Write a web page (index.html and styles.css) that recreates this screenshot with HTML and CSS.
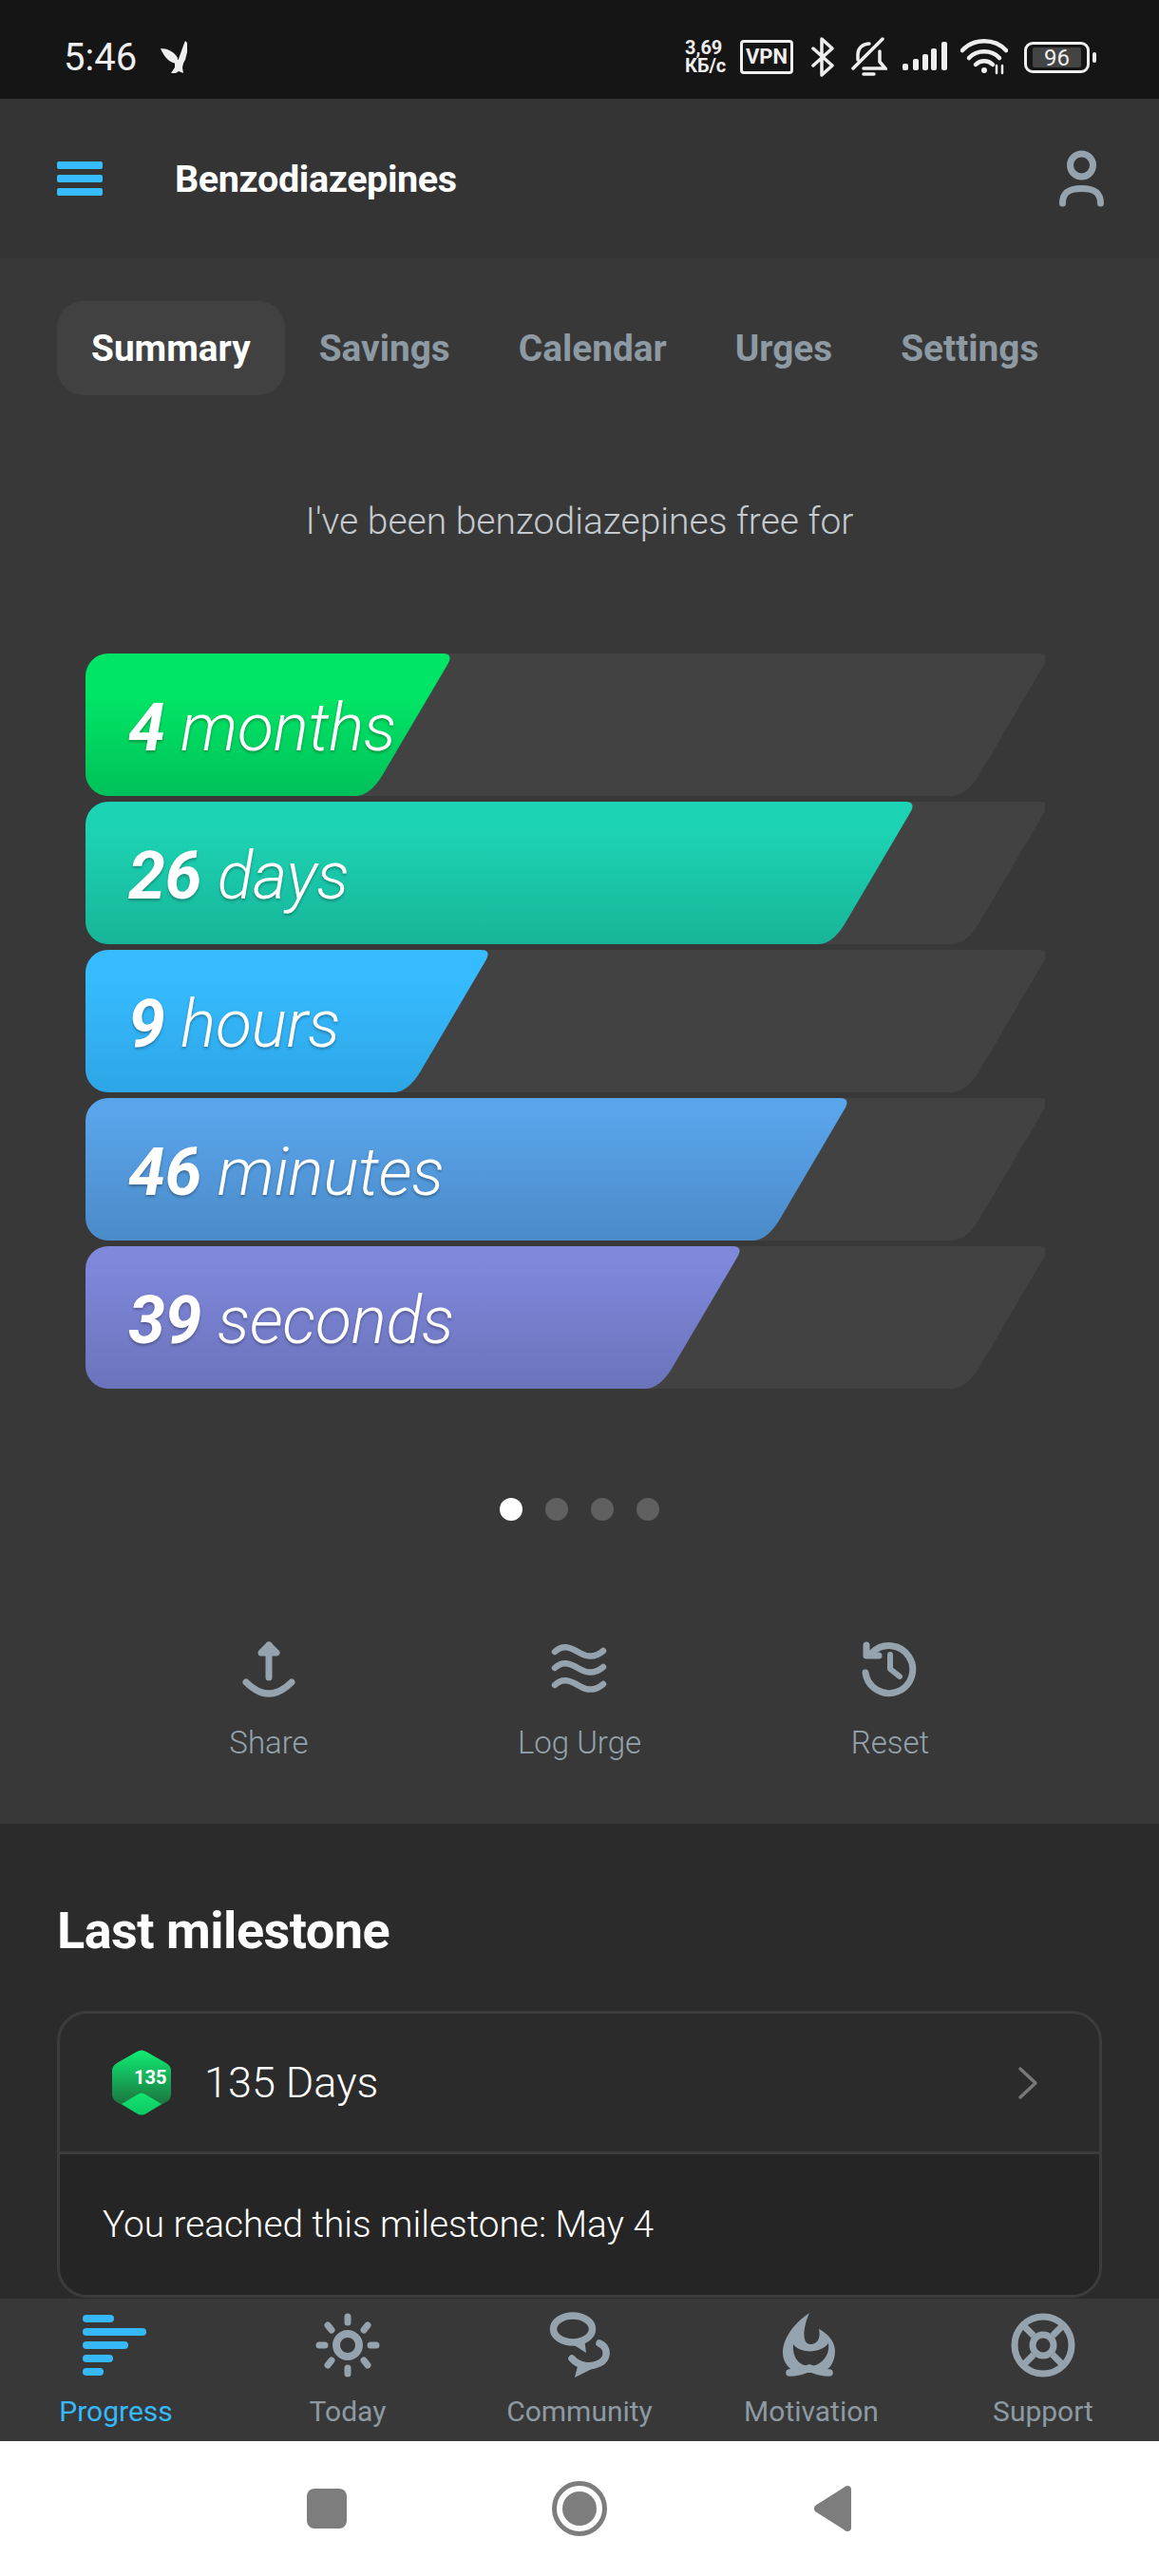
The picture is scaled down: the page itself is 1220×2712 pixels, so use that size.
FILE: index.html
```html
<!DOCTYPE html>
<html lang="en">
<head>
  <meta charset="UTF-8">
  <meta name="viewport" content="width=device-width, initial-scale=1.0">
  <title>Benzodiazepines</title>
  <link rel="stylesheet" href="styles.css">
</head>
<body>
<div class="screen">
  <!-- Status bar -->
  <div class="status-bar">
    <div class="status-left">
      <span class="clock">5:46</span>
      <svg class="bird" width="50" height="50" viewBox="0 0 50 50" fill="#eee">
        <path d="M9 16C16 16 23 19 27 26L26 32C19 31 13 26 9 16Z"/>
        <path d="M28 27L33 13L35 8L37 10L37 20L35 28L32 33L27 33Z"/>
        <path d="M24 28L34 27L32 36L33 42L28 40L25 42L20 42L24 36Z"/>
      </svg>
    </div>
    <div class="status-right">
      <div class="net-speed"><span>3,69</span><span>КБ/с</span></div>
      <span class="vpn-box">VPN</span>
      <svg class="gap-bt" width="26" height="42" viewBox="0 0 26 42" fill="none" stroke="#eee" stroke-width="3.5" stroke-linecap="round" stroke-linejoin="round">
        <path d="M3 12L23 30L12 40V2L23 12L3 30"/>
      </svg>
      <svg class="gap-bell" width="38" height="42" viewBox="0 0 38 42" fill="none" stroke="#eee" stroke-width="3.5" stroke-linecap="round">
        <path d="M2 33L33 2"/>
        <path d="M7 24V18C7 12 12 7 19 7"/>
        <path d="M13 33H36L30 26V15"/>
        <path d="M13 39H24"/>
      </svg>
      <svg class="gap-signal" width="47" height="30" viewBox="0 0 47 30" fill="#eee">
        <rect x="0" y="23" width="6" height="7" rx="2"/>
        <rect x="11" y="18" width="6" height="12" rx="2"/>
        <rect x="21" y="13" width="6" height="17" rx="2"/>
        <rect x="30" y="7" width="6" height="23" rx="2"/>
        <rect x="41" y="0" width="6" height="30" rx="2"/>
      </svg>
      <svg class="gap-wifi" width="50" height="38" viewBox="0 0 50 38" fill="none" stroke="#eee" stroke-width="4.5" stroke-linecap="round">
        <path d="M2 12C14 -1 36 -1 48 12"/>
        <path d="M9 20C17 11 33 11 41 20"/>
        <path d="M16 27C21 22 29 22 34 27"/>
        <circle cx="25" cy="33" r="3" fill="#eee" stroke="none"/>
        <path d="M38 28V36M44 28V36" stroke-width="2.5"/>
      </svg>
      <div class="battery">
        <div class="battery-body"><span class="battery-level">96</span></div>
        <div class="battery-nub"></div>
      </div>
    </div>
  </div>

  <!-- Top bar -->
  <div class="top-bar">
    <div class="hamburger"><span></span><span></span><span></span></div>
    <h2 class="top-title">Benzodiazepines</h2>
    <svg class="user-icon" width="50" height="60" viewBox="0 0 50 60" fill="none" stroke="#94a3ad" stroke-width="7" stroke-linecap="round">
      <circle cx="24.5" cy="16" r="12"/>
      <path d="M4.5 56C4.5 43 14 40.5 24.5 40.5C35 40.5 44.5 43 44.5 56"/>
    </svg>
  </div>

  <!-- Summary -->
  <div class="summary">
    <div class="tabs">
      <span class="tab active">Summary</span>
      <span class="tab">Savings</span>
      <span class="tab">Calendar</span>
      <span class="tab">Urges</span>
      <span class="tab">Settings</span>
    </div>

    <p class="lead">I've been benzodiazepines free for</p>

    <div class="bars">
      <div class="bar">
        <svg class="bar-shape" width="1010" height="150" viewBox="0 0 1010 150">
          <defs><linearGradient id="g-months" x1="0" y1="0" x2="0" y2="1"><stop offset="0.3" stop-color="#00e565"/><stop offset="1" stop-color="#00c15a"/></linearGradient></defs>
          <path fill="#424242" d="M24 0H1004Q1015 0 1010 10L940 129Q927 150 912 150H24A24 24 0 0 1 0 126V24A24 24 0 0 1 24 0Z"/>
          <path fill="url(#g-months)" d="M24 0H376Q387 0 382 10L312 129Q299 150 284 150H24A24 24 0 0 1 0 126V24A24 24 0 0 1 24 0Z"/>
        </svg>
        <div class="bar-label"><b>4</b> months</div>
      </div>
      <div class="bar">
        <svg class="bar-shape" width="1010" height="150" viewBox="0 0 1010 150">
          <defs><linearGradient id="g-days" x1="0" y1="0" x2="0" y2="1"><stop offset="0.2" stop-color="#1cd3b3"/><stop offset="1" stop-color="#17b599"/></linearGradient></defs>
          <path fill="#424242" d="M24 0H1004Q1015 0 1010 10L940 129Q927 150 912 150H24A24 24 0 0 1 0 126V24A24 24 0 0 1 24 0Z"/>
          <path fill="url(#g-days)" d="M24 0H863Q874 0 869 10L799 129Q786 150 771 150H24A24 24 0 0 1 0 126V24A24 24 0 0 1 24 0Z"/>
        </svg>
        <div class="bar-label"><b>26</b> days</div>
      </div>
      <div class="bar">
        <svg class="bar-shape" width="1010" height="150" viewBox="0 0 1010 150">
          <defs><linearGradient id="g-hours" x1="0" y1="0" x2="0" y2="1"><stop offset="0.2" stop-color="#36bbff"/><stop offset="1" stop-color="#2da6e6"/></linearGradient></defs>
          <path fill="#424242" d="M24 0H1004Q1015 0 1010 10L940 129Q927 150 912 150H24A24 24 0 0 1 0 126V24A24 24 0 0 1 24 0Z"/>
          <path fill="url(#g-hours)" d="M24 0H416Q427 0 422 10L352 129Q339 150 324 150H24A24 24 0 0 1 0 126V24A24 24 0 0 1 24 0Z"/>
        </svg>
        <div class="bar-label"><b>9</b> hours</div>
      </div>
      <div class="bar">
        <svg class="bar-shape" width="1010" height="150" viewBox="0 0 1010 150">
          <defs><linearGradient id="g-minutes" x1="0" y1="0" x2="0" y2="1"><stop offset="0.1" stop-color="#5aa4ec"/><stop offset="1" stop-color="#4a8bc8"/></linearGradient></defs>
          <path fill="#424242" d="M24 0H1004Q1015 0 1010 10L940 129Q927 150 912 150H24A24 24 0 0 1 0 126V24A24 24 0 0 1 24 0Z"/>
          <path fill="url(#g-minutes)" d="M24 0H794Q805 0 800 10L730 129Q717 150 702 150H24A24 24 0 0 1 0 126V24A24 24 0 0 1 24 0Z"/>
        </svg>
        <div class="bar-label"><b>46</b> minutes</div>
      </div>
      <div class="bar">
        <svg class="bar-shape" width="1010" height="150" viewBox="0 0 1010 150">
          <defs><linearGradient id="g-seconds" x1="0" y1="0" x2="0" y2="1"><stop offset="0.1" stop-color="#7f88db"/><stop offset="1" stop-color="#6b73bb"/></linearGradient></defs>
          <path fill="#424242" d="M24 0H1004Q1015 0 1010 10L940 129Q927 150 912 150H24A24 24 0 0 1 0 126V24A24 24 0 0 1 24 0Z"/>
          <path fill="url(#g-seconds)" d="M24 0H681Q692 0 687 10L617 129Q604 150 589 150H24A24 24 0 0 1 0 126V24A24 24 0 0 1 24 0Z"/>
        </svg>
        <div class="bar-label"><b>39</b> seconds</div>
      </div>
    </div>

    <div class="dots">
      <span class="dot on"></span>
      <span class="dot"></span>
      <span class="dot"></span>
      <span class="dot"></span>
    </div>

    <div class="actions">
      <div class="action">
        <svg width="60" height="60" viewBox="0 0 60 60" fill="none" stroke="#94a3ad" stroke-width="7" stroke-linecap="round" stroke-linejoin="round">
          <path d="M30 4V38"/>
          <path d="M22 12L30 4L38 12Z" fill="#94a3ad"/>
          <path d="M6 43Q30 67 54 43"/>
        </svg>
        <span class="action-label">Share</span>
      </div>
      <div class="action">
        <svg width="60" height="60" viewBox="0 0 60 60" fill="none" stroke="#94a3ad" stroke-width="6.5" stroke-linecap="round">
          <path d="M4 11C12 3 20 6 30 12C40 18 48 16 55 10"/>
          <path d="M4 28C12 20 20 23 30 29C40 35 48 33 55 27"/>
          <path d="M4 46C12 38 20 41 30 47C40 53 48 51 55 45"/>
        </svg>
        <span class="action-label">Log Urge</span>
      </div>
      <div class="action">
        <svg width="60" height="60" viewBox="0 0 60 60" fill="none" stroke="#94a3ad" stroke-width="7" stroke-linecap="round" stroke-linejoin="round">
          <path d="M11 12A25 25 0 1 1 4 33"/>
          <path d="M5 4V15H18"/>
          <path d="M30 14V29L40 37" stroke-width="6"/>
        </svg>
        <span class="action-label">Reset</span>
      </div>
    </div>
  </div>

  <!-- Last milestone -->
  <div class="milestone-section">
    <h2 class="section-title">Last milestone</h2>
    <div class="card">
      <div class="card-top">
        <svg class="hex" width="62" height="69" viewBox="0 0 62 69">
          <defs>
            <linearGradient id="hex-main" x1="0" y1="0" x2="0" y2="1"><stop offset="0.05" stop-color="#10e670"/><stop offset="0.8" stop-color="#1b7a41"/></linearGradient>
            <linearGradient id="hex-low" x1="0" y1="0" x2="0" y2="1"><stop offset="0" stop-color="#12e56f"/><stop offset="1" stop-color="#10c865"/></linearGradient>
          </defs>
          <path fill="url(#hex-main)" d="M26 2Q31 -1 36 2L57 14Q62 17 62 22V47Q62 52 57 55L36 67Q31 70 26 67L5 55Q0 52 0 47V22Q0 17 5 14Z"/>
          <path fill="url(#hex-low)" d="M27 47Q31 44 35 47L52 57L36 67Q31 70 26 67L10 57Z"/>
          <text class="hex-text" x="23" y="36">135</text>
        </svg>
        <span class="card-title">135 Days</span>
        <svg class="chevron" width="24" height="36" viewBox="0 0 24 36" fill="none" stroke="#787878" stroke-width="3.5" stroke-linecap="round" stroke-linejoin="round">
          <path d="M4 3L20 18L4 33"/>
        </svg>
      </div>
      <div class="card-bottom">You reached this milestone: May 4</div>
    </div>
  </div>

  <!-- Bottom nav -->
  <div class="tab-bar">
    <div class="tab-item selected">
      <svg width="90" height="90" viewBox="0 0 90 90" fill="#36b9fa">
        <rect x="10" y="12" width="33" height="8" rx="4"/>
        <rect x="10" y="26" width="67" height="8" rx="4"/>
        <rect x="10" y="40" width="48" height="8" rx="4"/>
        <rect x="10" y="54" width="32" height="8" rx="4"/>
        <rect x="10" y="68" width="22" height="8" rx="4"/>
      </svg>
      <span>Progress</span>
    </div>
    <div class="tab-item">
      <svg width="90" height="90" viewBox="0 0 90 90" fill="none" stroke="#94a3ad" stroke-width="7" stroke-linecap="round">
        <circle cx="45" cy="44" r="12" stroke-width="8"/>
        <path d="M45 14V20M45 68V74M15 44H21M69 44H75M24 23L28 28M62 60L66 65M66 23L62 28M28 60L24 65"/>
      </svg>
      <span>Today</span>
    </div>
    <div class="tab-item">
      <svg width="90" height="90" viewBox="0 0 90 90" fill="none" stroke="#94a3ad" stroke-width="7.5" stroke-linecap="round">
        <ellipse cx="38" cy="27" rx="20.5" ry="14"/>
        <path d="M36 42L50 37L52 52Z" fill="#94a3ad" stroke="none"/>
        <path d="M66 42C75 46 76 58 66 63C56 68 44 66 37 58"/>
        <path d="M43 66L40 78L60 68Z" fill="#94a3ad" stroke="none"/>
      </svg>
      <span>Community</span>
    </div>
    <div class="tab-item">
      <svg width="90" height="90" viewBox="0 0 90 90" fill="#94a3ad">
        <path fill-rule="evenodd" d="M43 10C28 20 15 36 15 52C15 63 23 71 32 73H56C64 70 70 62 70 50C70 41 63 32 53 27C55 36 52 43 44 43C36 43 35 28 43 10ZM26 43C33 53 55 53 63 42C65 56 54 66 44 66C32 66 25 57 26 43Z"/>
        <path d="M22 73Q32 73 43 68Q54 73 64 73" fill="none" stroke="#94a3ad" stroke-width="7.5" stroke-linecap="round"/>
      </svg>
      <span>Motivation</span>
    </div>
    <div class="tab-item">
      <svg width="90" height="90" viewBox="0 0 90 90" fill="none" stroke="#94a3ad" stroke-width="7">
        <circle cx="45" cy="44" r="30"/>
        <circle cx="45" cy="44" r="11"/>
        <path d="M35 34L24 23M55 34L66 23M35 54L24 65M55 54L66 65"/>
      </svg>
      <span>Support</span>
    </div>
  </div>

  <!-- System nav -->
  <div class="system-nav">
    <span class="sys-square"></span>
    <span class="sys-home"><span class="sys-home-dot"></span></span>
    <svg width="40" height="48" viewBox="0 0 40 48" fill="#7d7d7d">
      <path d="M36 0Q40 0 40 4V44Q40 48 36 48Q34 48 32 46L2 27Q0 24 2 21L32 2Q34 0 36 0Z"/>
    </svg>
  </div>
</div>
</body>
</html>
```

FILE: styles.css
```css
/* General */
body {
  margin: 0;
  font-family: 'Roboto', 'Liberation Sans', sans-serif;
  color: white;
  background: #383838;
}

.screen {
  width: 1220px;
  height: 2712px;
  display: flex;
  flex-direction: column;
  overflow: hidden;
}

/* Status bar */
.status-bar {
  height: 104px;
  flex: none;
  box-sizing: border-box;
  background: #151515;
  display: flex;
  justify-content: space-between;
  align-items: center;
  padding: 16px 66px 0 67px;
  color: #eee;
}

.status-left {
  display: flex;
  align-items: center;
}

.clock {
  font-size: 40px;
  width: 93px;
}

.status-right {
  display: flex;
  align-items: center;
}

.net-speed {
  display: flex;
  flex-direction: column;
  font-size: 20px;
  font-weight: 700;
  line-height: 19px;
  width: 45px;
  white-space: nowrap;
}

.vpn-box {
  box-sizing: border-box;
  width: 56px;
  height: 36px;
  margin-left: 13px;
  border: 3px solid #eee;
  border-radius: 4px;
  font-size: 22px;
  font-weight: 700;
  line-height: 30px;
  text-align: center;
}

.gap-bt { margin-left: 18px; }
.gap-bell { margin-left: 17px; }
.gap-signal { margin-left: 16px; margin-top: -2px; }
.gap-wifi { margin-left: 14px; }

.battery {
  display: flex;
  align-items: center;
  margin-left: 17px;
}

.battery-body {
  box-sizing: border-box;
  width: 69px;
  height: 33px;
  border: 3px solid #eee;
  border-radius: 9px;
  padding: 3px 6px;
}

.battery-level {
  display: block;
  height: 21px;
  background: #444;
  border-radius: 2px;
  font-size: 24px;
  line-height: 22px;
  text-align: center;
}

.battery-nub {
  width: 4px;
  height: 11px;
  margin-left: 3px;
  background: #eee;
  border-radius: 2px;
}

/* Top bar */
.top-bar {
  height: 168px;
  flex: none;
  background: #343434;
  display: flex;
  align-items: center;
  padding: 0 56px 0 60px;
}

.hamburger {
  width: 48px;
  display: flex;
  flex-direction: column;
  gap: 6px;
}

.hamburger span {
  height: 8px;
  background: #36bcff;
  border-radius: 2px;
}

.top-title {
  margin: 0 0 0 76px;
  flex: 1;
  font-size: 39.6px;
  font-weight: 700;
  letter-spacing: -0.4px;
}

/* Summary */
.summary {
  height: 1648px;
  flex: none;
  box-sizing: border-box;
  background: #383838;
  padding-top: 45px;
}

.tabs {
  display: flex;
  margin-left: 60px;
}

.tab {
  padding: 0 36px;
  height: 99px;
  line-height: 99px;
  font-size: 38.8px;
  font-weight: 700;
  color: #8d9aa3;
  border-radius: 28px;
}

.tab.active {
  background: #414141;
  color: white;
}

.lead {
  margin: 108px 0 0;
  font-size: 39px;
  font-weight: 300;
  line-height: 50px;
  text-align: center;
  color: #c4cace;
}

.bars {
  margin: 114px 0 0 90px;
  width: 1010px;
  display: flex;
  flex-direction: column;
  gap: 6px;
}

.bar {
  position: relative;
  height: 150px;
}

.bar-shape {
  position: absolute;
  top: 0;
  left: 0;
}

.bar-label {
  position: relative;
  padding: 7px 0 0 45px;
  font-size: 70px;
  font-style: italic;
  font-weight: 300;
  line-height: 143px;
  letter-spacing: -0.4px;
  text-shadow: 0 2px 3px rgba(0, 0, 0, 0.3);
}

.bar-label b {
  font-weight: 700;
}

.dots {
  margin-top: 115px;
  display: flex;
  justify-content: center;
  gap: 24px;
}

.dot {
  width: 24px;
  height: 24px;
  border-radius: 50%;
  background: #606060;
}

.dot.on {
  background: white;
}

.actions {
  margin-top: 127px;
  display: flex;
  justify-content: center;
}

.action {
  width: 327px;
  display: flex;
  flex-direction: column;
  align-items: center;
}

.action-label {
  margin-top: 27px;
  font-size: 33px;
  font-weight: 300;
  line-height: 40px;
  color: #94a3ad;
}

/* Last milestone */
.milestone-section {
  flex: 1;
  min-height: 0;
  background: #2b2b2b;
  padding: 0 60px;
  overflow: hidden;
}

.section-title {
  margin: 81px 0 0;
  font-size: 54px;
  font-weight: 700;
  line-height: 64px;
  letter-spacing: -0.5px;
}

.card {
  margin-top: 52px;
  border: 3px solid #3c3c3c;
  border-radius: 32px;
  overflow: hidden;
}

.card-top {
  height: 145px;
  display: flex;
  align-items: center;
  padding: 0 63px 0 55px;
  border-bottom: 3px solid #3c3c3c;
}

.card-title {
  flex: 1;
  margin-left: 35px;
  font-size: 45px;
  font-weight: 300;
}

.hex-text {
  font-family: 'Roboto', sans-serif;
  font-size: 20px;
  font-weight: 700;
  fill: white;
}

.card-bottom {
  height: 148px;
  background: #252525;
  padding-left: 45px;
  font-size: 38.8px;
  font-weight: 300;
  line-height: 148px;
}

/* Bottom nav */
.tab-bar {
  height: 150px;
  flex: none;
  background: #383838;
  display: grid;
  grid-template-columns: repeat(5, 1fr);
  padding-top: 5px;
  box-sizing: border-box;
}

.tab-item {
  display: flex;
  flex-direction: column;
  align-items: center;
  font-size: 30px;
  line-height: 36px;
  color: #8d9aa3;
}

.tab-item span {
  margin-top: 6px;
}

.tab-item.selected {
  color: #36b9fa;
}

/* System nav */
.system-nav {
  height: 142px;
  flex: none;
  background: white;
  display: flex;
  align-items: center;
  padding-left: 323px;
}

.sys-square {
  width: 42px;
  height: 42px;
  background: #7d7d7d;
  border-radius: 8px;
}

.sys-home {
  box-sizing: border-box;
  width: 58px;
  height: 58px;
  margin-left: 216px;
  border: 5px solid #7d7d7d;
  border-radius: 50%;
  display: flex;
  align-items: center;
  justify-content: center;
}

.sys-home-dot {
  width: 36px;
  height: 36px;
  background: #7d7d7d;
  border-radius: 50%;
}

.system-nav svg {
  margin-left: 217px;
}
```
